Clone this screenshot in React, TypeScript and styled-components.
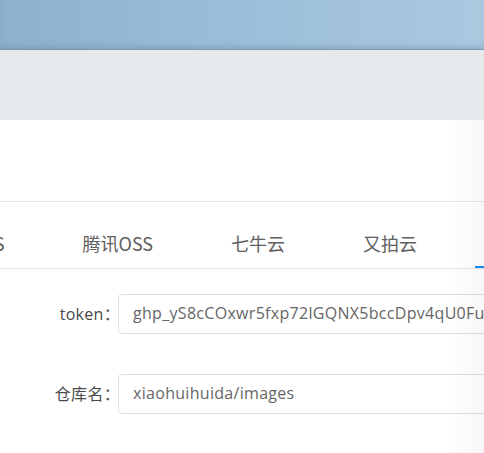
import React from "react";
import styled, { createGlobalStyle } from "styled-components";

const Global = createGlobalStyle`
  html, body { margin: 0; padding: 0; background: #fff; overflow: hidden; }
  body { font-family: "Open Sans", "Noto Sans CJK SC", sans-serif; }
  * { box-sizing: border-box; }
`;

const Page = styled.div`
  position: relative;
  width: 484px;
  height: 453px;
  overflow: hidden;
  background: #fff;
`;

const TopBar = styled.div`
  height: 50px;
  background: linear-gradient(90deg, #8cb2cf 0%, #9bbdd8 45%, #aac9df 100%);
  box-shadow: inset 0 -6px 6px -4px rgba(60, 90, 120, 0.25);
  border-bottom: 1px solid #7d98ae;
`;

const SubBar = styled.div`
  height: 70px;
  background: #e6e9ec;
`;

const Header = styled.div`
  height: 82px;
  border-bottom: 1px solid #e8e8e8;
`;

const TabBar = styled.div`
  margin-top: 18px;
  height: 49px;
  border-bottom: 1px solid #e4e4e4;
  overflow: hidden;
`;

const TabList = styled.div`
  display: flex;
  gap: 40px;
  margin-left: -103px;
  height: 100%;
`;

const Tab = styled.div<{ $active?: boolean }>`
  position: relative;
  flex: none;
  padding: 0 19px;
  height: 48px;
  line-height: 46px;
  font-family: "Noto Sans CJK SC", sans-serif;
  font-size: 18px;
  color: ${(p) => (p.$active ? "#1890ff" : "#606060")};
  white-space: nowrap;
  &::after {
    content: "";
    display: ${(p) => (p.$active ? "block" : "none")};
    position: absolute;
    left: -1px;
    right: 0;
    bottom: 0;
    height: 2px;
    background: #1890ff;
  }
`;

const Form = styled.div`
  display: flex;
  flex-direction: column;
  gap: 40px;
  padding-top: 25px;
`;

const Row = styled.div`
  display: flex;
  align-items: center;
`;

const Label = styled.label`
  width: 120px;
  flex: none;
  margin-right: -2px;
  margin-top: -2px;
  text-align: right;
  font-size: 16px;
  letter-spacing: 0.3px;
  color: #4a4a4a;
  white-space: nowrap;
`;

const Input = styled.input`
  flex: none;
  width: 480px;
  height: 40px;
  padding: 0 14px 2px;
  border: 1px solid #dcdfe6;
  border-radius: 4px;
  font-family: "Open Sans", "Noto Sans CJK SC", sans-serif;
  font-size: 16px;
  letter-spacing: 0.3px;
  color: #666;
  background: #fff;
  outline: none;
`;

const EdgeShade = styled.div`
  position: absolute;
  top: 120px;
  right: 0;
  bottom: 0;
  width: 36px;
  background: linear-gradient(90deg, rgba(0, 0, 0, 0) 0%, rgba(0, 0, 0, 0.03) 100%);
  pointer-events: none;
`;

const tabs = ["阿里云OSS", "腾讯OSS", "七牛云", "又拍云", "GitHub"];

export default function App() {
  return (
    <Page>
      <Global />
      <TopBar />
      <SubBar />
      <Header />
      <TabBar>
        <TabList>
          {tabs.map((t) => (
            <Tab key={t} $active={t === "GitHub"}>
              {t}
            </Tab>
          ))}
        </TabList>
      </TabBar>
      <Form>
        <Row>
          <Label>token：</Label>
          <Input readOnly value="ghp_yS8cCOxwr5fxp72lGQNX5bccDpv4qU0FuXk2" />
        </Row>
        <Row>
          <Label>仓库名：</Label>
          <Input readOnly value="xiaohuihuida/images" />
        </Row>
      </Form>
      <EdgeShade />
    </Page>
  );
}
